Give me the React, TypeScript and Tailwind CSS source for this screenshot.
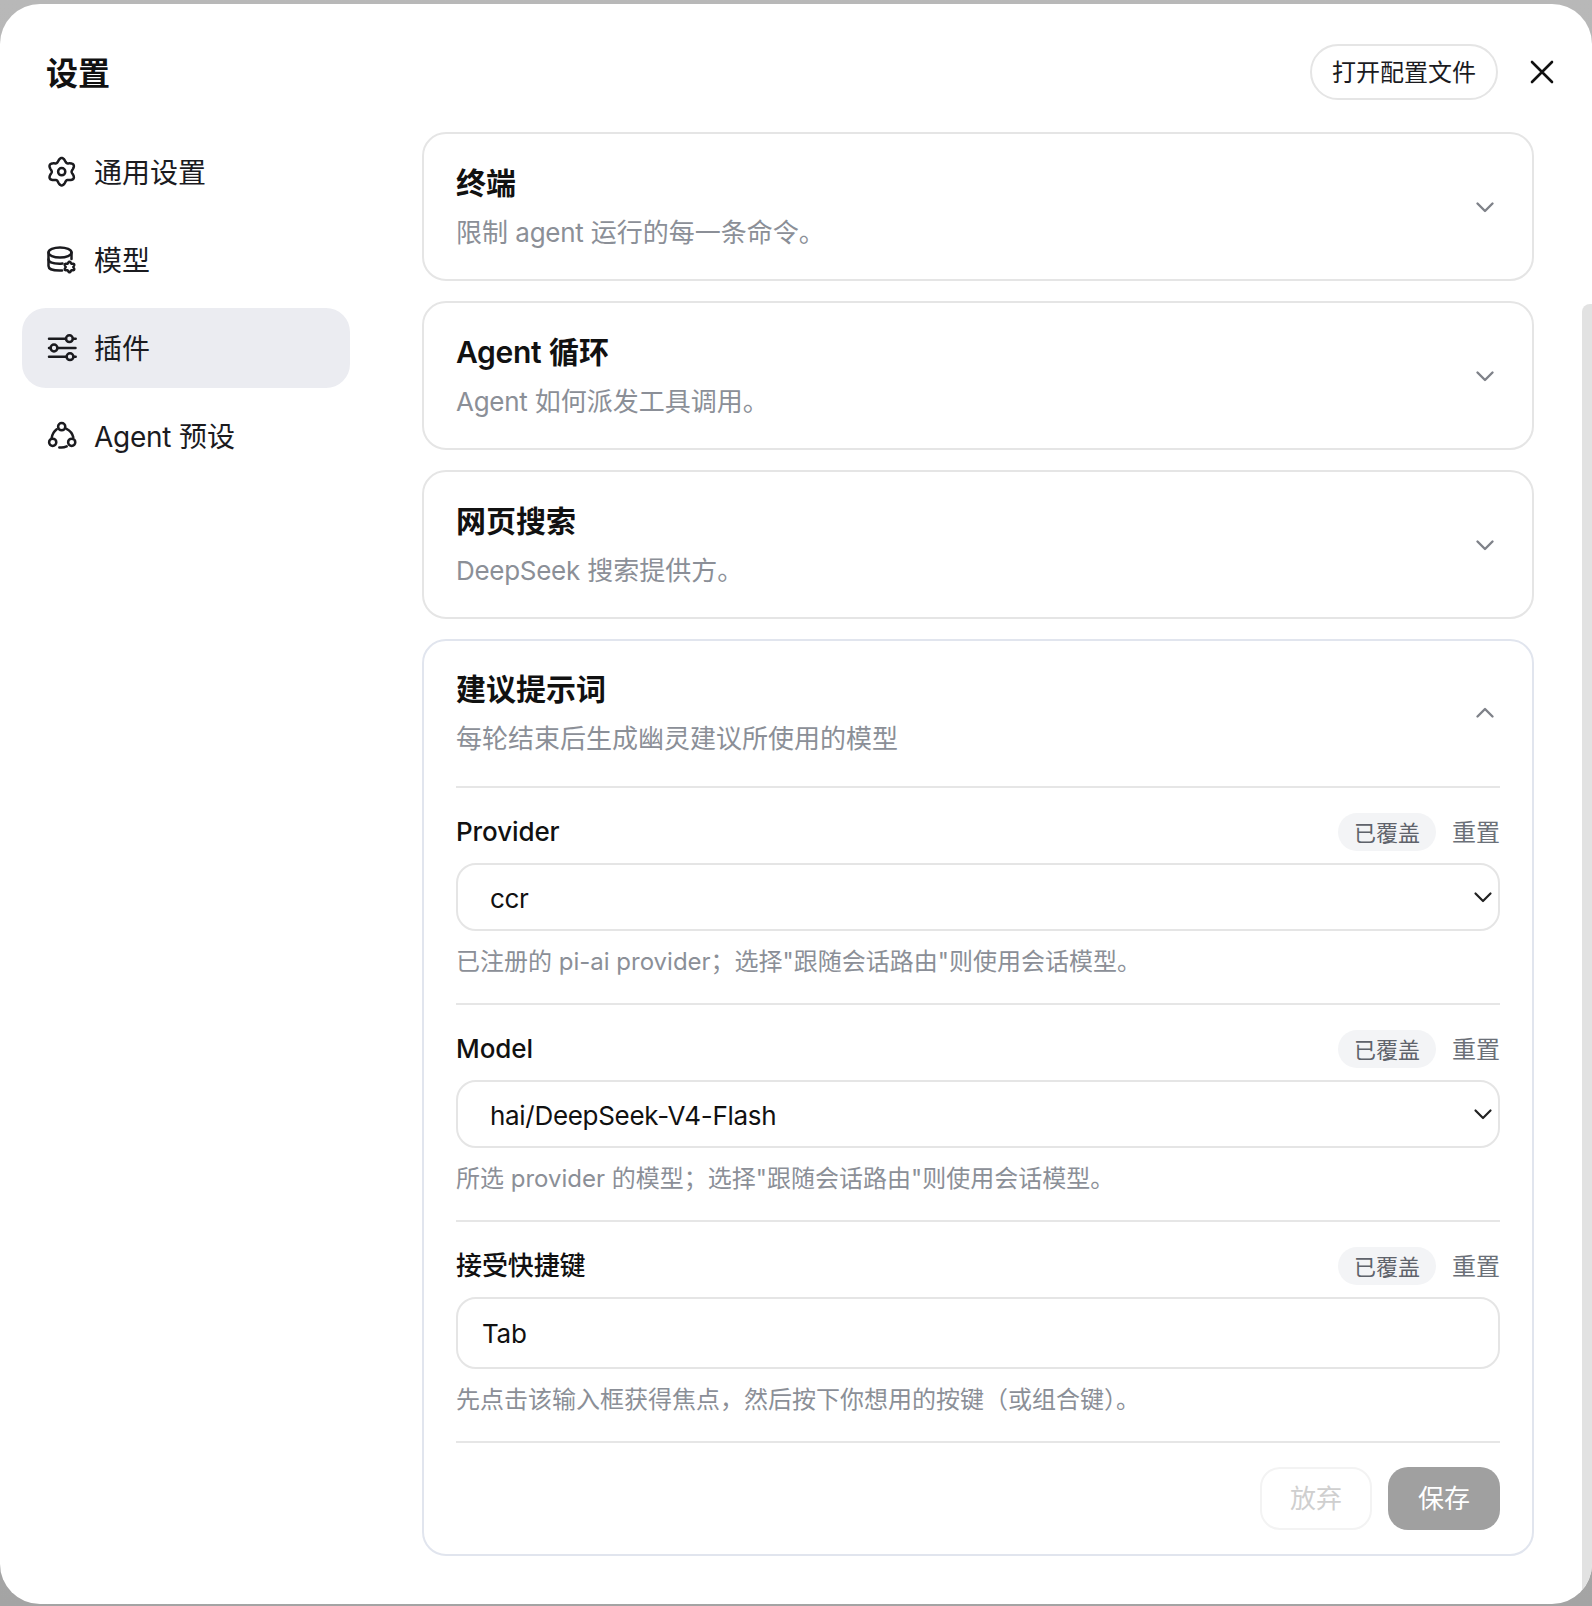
import { ReactNode } from "react";

const font = "font-['Inter','Noto_Sans_CJK_SC',sans-serif]";

// smooth lobed outline used by the gear icons
function flower(cx: number, cy: number, mid: number, amp: number) {
  const pts: string[] = [];
  for (let i = 0; i < 120; i++) {
    const a = (i / 120) * Math.PI * 2;
    const r = mid + amp * Math.cos(6 * a);
    pts.push(`${(cx + r * Math.sin(a)).toFixed(2)} ${(cy - r * Math.cos(a)).toFixed(2)}`);
  }
  return `M${pts.join("L")}Z`;
}

function NavIcon({ children }: { children: ReactNode }) {
  return (
    <svg width="44" height="44" viewBox="0 0 44 44" fill="none" stroke="#1b1b1f" strokeWidth="2.5" strokeLinecap="round" strokeLinejoin="round" className="shrink-0">
      {children}
    </svg>
  );
}

const GearIcon = () => (
  <NavIcon>
    <path d={flower(21.7, 21.7, 11.8, 1.9)} />
    <circle cx="21.7" cy="21.7" r="3.6" />
  </NavIcon>
);

const ModelIcon = () => (
  <NavIcon>
    <ellipse cx="20" cy="14.5" rx="11.5" ry="5" />
    <path d="M8.5 14.5V28c0 2.8 4.6 4.6 11 4.6 1 0 1.8 0 2.6-.1" />
    <path d="M8.5 21.5c0 2.6 4.6 4.2 11 4.2 1 0 2-.1 3-.2" />
    <path d="M31.5 14.5v6.5" />
    <path d={flower(29.5, 29, 4.6, 0.8)} strokeWidth="2.4" />
  </NavIcon>
);

const SlidersIcon = () => (
  <NavIcon>
    <path d="M9 12.7h17M33 12.7h2.7M9 30.7h17.5M33.5 30.7h2.2M9 22h1.5M17.5 22h18" />
    <circle cx="29.4" cy="12.7" r="3.4" />
    <circle cx="14" cy="22" r="3.4" />
    <circle cx="30" cy="30.7" r="3.4" />
  </NavIcon>
);

const RingIcon = () => (
  <NavIcon>
    <circle cx="21.7" cy="12.7" r="3.6" />
    <circle cx="12.7" cy="28.3" r="3.6" />
    <circle cx="31.7" cy="28.3" r="3.6" />
    <path d="M26.5 14.8A13 13 0 0 1 33.3 23.2M16.7 15.2A13 13 0 0 0 11.7 24M19.3 33.4A13 13 0 0 0 26.7 32.4" />
  </NavIcon>
);

function Chevron({ up = false, dark = false }: { up?: boolean; dark?: boolean }) {
  return (
    <svg width="24" height="24" viewBox="0 0 24 24" fill="none" stroke={dark ? "#222222" : "#7f8289"} strokeWidth={dark ? 2.2 : 2.4} strokeLinecap="round" strokeLinejoin="round" className="shrink-0">
      <path d={up ? "M4.5 15.5l7.5-7.5 7.5 7.5" : "M4.5 8.5l7.5 7.5 7.5-7.5"} />
    </svg>
  );
}

// latin runs are a touch narrower in the reference
const Lat = ({ children }: { children: ReactNode }) => <span className="tracking-[-0.3px]">{children}</span>;

function NavItem({ icon, label, active = false }: { icon: ReactNode; label: ReactNode; active?: boolean }) {
  return (
    <div className={`flex h-[80px] w-[328px] items-center gap-[10px] rounded-[24px] pl-[18px] text-[28px] text-[#1b1b1f] ${active ? "bg-[#ebecf1]" : ""}`}>
      {icon}
      <span className="pt-[2px]">{label}</span>
    </div>
  );
}

function CardHead({ title, desc }: { title: ReactNode; desc: ReactNode }) {
  return (
    <div>
      <div className="text-[30px] font-semibold leading-[40px] text-[#111111]">{title}</div>
      <div className="mt-[12px] text-[26px] leading-[36px] text-[#8b8f97]">{desc}</div>
    </div>
  );
}

function Card({ title, desc }: { title: ReactNode; desc: ReactNode }) {
  return (
    <div className="flex h-[149px] items-center justify-between rounded-[24px] border-2 border-[#e5e5e5] pl-[32px] pr-[35px]">
      <CardHead title={title} desc={desc} />
      <Chevron />
    </div>
  );
}

function FieldHead({ label }: { label: string }) {
  return (
    <div className="flex h-[38px] items-center justify-between">
      <span className="pb-[2px] text-[26px] font-medium tracking-[-0.1px] text-[#111111]">{label}</span>
      <div className="flex items-center gap-[16px]">
        <span className="flex h-[38px] w-[98px] items-center justify-center rounded-full bg-[#f3f4f6] pt-[2px] text-[22px] text-[#5f636b]">已覆盖</span>
        <span className="pt-[1px] text-[24px] text-[#6b7078]">重置</span>
      </div>
    </div>
  );
}

function SelectField({ label, value, hint }: { label: string; value: string; hint: string }) {
  return (
    <div className="border-t-2 border-[#e6e6e6] pb-[23px] pt-[25px]">
      <FieldHead label={label} />
      <div className="mt-[12px] flex h-[68px] items-center justify-between rounded-[20px] border-2 border-[#e5e5e5] pl-[32px] pr-[3px] text-[26px] text-[#111111]">
        <span className="pt-[2px] tracking-[-0.3px]">{value}</span>
        <Chevron dark />
      </div>
      <div className="mt-[12px] pt-[1px] text-[24px] leading-[36px] text-[#8b8f97]">{hint}</div>
    </div>
  );
}

export default function App() {
  return (
    <div className={`h-[1606px] w-[1592px] bg-linear-to-b from-[#b8b8b8] to-[#a4a4a4] pb-[2px] pt-[4px] ${font}`}>
      <div className="flex h-[1600px] overflow-hidden rounded-[40px] bg-white">
        <div className="flex min-w-0 flex-1 flex-col">
          <div className="flex h-[96px] items-start justify-between pl-[46px] pr-[26px] pt-[40px]">
            <div className="flex h-[56px] items-center pt-[3px] text-[32px] font-semibold text-[#111111]">设置</div>
            <div className="flex items-center gap-[30px]">
              <div className="flex h-[56px] w-[188px] items-center justify-center rounded-full border-2 border-[#e5e5e5] pt-[2px] text-[24px] text-[#1b1b1f]">打开配置文件</div>
              <svg width="28" height="28" viewBox="0 0 28 28" fill="none" stroke="#111111" strokeWidth="2.6" strokeLinecap="round">
                <path d="M4 4l20 20M24 4L4 24" />
              </svg>
            </div>
          </div>
          <div className="mt-[32px] flex">
            <div className="flex w-[400px] flex-col gap-[8px] pl-[22px]">
              <NavItem icon={<GearIcon />} label="通用设置" />
              <NavItem icon={<ModelIcon />} label="模型" />
              <NavItem icon={<SlidersIcon />} label="插件" active />
              <NavItem icon={<RingIcon />} label={<><Lat>Agent</Lat> 预设</>} />
            </div>
            <div className="ml-[22px] flex w-[1112px] flex-col gap-[20px]">
              <Card title="终端" desc={<>限制 <Lat>agent</Lat> 运行的每一条命令。</>} />
              <Card title={<><Lat>Agent</Lat> 循环</>} desc={<><Lat>Agent</Lat> 如何派发工具调用。</>} />
              <Card title="网页搜索" desc={<><Lat>DeepSeek</Lat> 搜索提供方。</>} />
              <div className="rounded-[24px] border-2 border-[#e1e5ee] px-[32px] pb-[24px] pt-[28px]">
                <div className="flex h-[88px] items-center justify-between pr-[3px]">
                  <CardHead title="建议提示词" desc="每轮结束后生成幽灵建议所使用的模型" />
                  <Chevron up />
                </div>
                <div className="mt-[29px]">
                  <SelectField label="Provider" value="ccr" hint={'已注册的 pi-ai provider；选择"跟随会话路由"则使用会话模型。'} />
                  <SelectField label="Model" value="hai/DeepSeek-V4-Flash" hint={'所选 provider 的模型；选择"跟随会话路由"则使用会话模型。'} />
                  <div className="border-t-2 border-[#e6e6e6] pb-[23px] pt-[25px]">
                    <FieldHead label="接受快捷键" />
                    <div className="mt-[12px] flex h-[72px] items-center rounded-[20px] border-2 border-[#e5e5e5] pl-[24px] text-[26px] tracking-[-0.3px] text-[#111111]">Tab</div>
                    <div className="mt-[12px] pt-[1px] text-[24px] leading-[36px] text-[#8b8f97]">先点击该输入框获得焦点，然后按下你想用的按键（或组合键）。</div>
                  </div>
                  <div className="flex justify-end gap-[16px] border-t-2 border-[#e6e6e6] pt-[24px]">
                    <div className="flex h-[63px] w-[112px] items-center justify-center rounded-[20px] border-2 border-[#f3f3f3] text-[26px] text-[#cfcfcf]">放弃</div>
                    <div className="flex h-[63px] w-[112px] items-center justify-center rounded-[20px] bg-[#a0a0a0] text-[26px] text-white">保存</div>
                  </div>
                </div>
              </div>
            </div>
          </div>
        </div>
        <div className="mt-[300px] w-[10px] rounded-tl-[8px] bg-[#e2e2e2]" />
      </div>
    </div>
  );
}
